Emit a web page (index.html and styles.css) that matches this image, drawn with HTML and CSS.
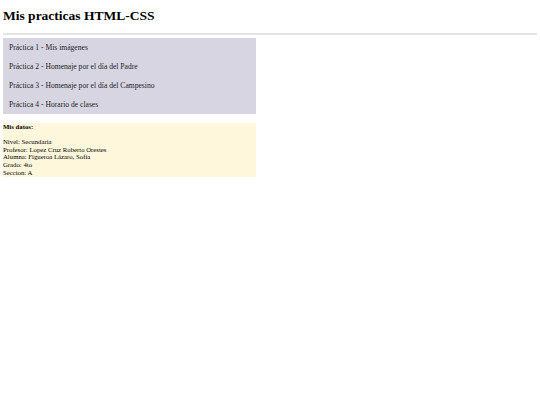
FILE: index.html
```html
<!DOCTYPE html>
<html lang="es">
<head>
<meta charset="utf-8">
<title>Mis practicas HTML-CSS</title>
<link rel="stylesheet" href="styles.css">
</head>
<body>
<div class="page">
  <h1 class="title">Mis practicas HTML-CSS</h1>
  <div class="rule"></div>
  <nav class="menu">
    <div class="menu-item">Práctica 1 - Mis imágenes</div>
    <div class="menu-item">Práctica 2 - Homenaje por el día del Padre</div>
    <div class="menu-item">Práctica 3 - Homenaje por el día del Campesino</div>
    <div class="menu-item">Práctica 4 - Horario de clases</div>
  </nav>
  <section class="datos">
    <div class="datos-title">Mis datos:</div>
    <div class="datos-list">
      <div class="datos-line">Nivel: Secundaria</div>
      <div class="datos-line">Profesor: Lopez Cruz Roberto Orestes</div>
      <div class="datos-line">Alumna: Figueroa Lázaro, Sofía</div>
      <div class="datos-line">Grado: 4to</div>
      <div class="datos-line">Seccion: A</div>
    </div>
  </section>
</div>
</body>
</html>
```

FILE: styles.css
```css
html, body {
  margin: 0;
  padding: 0;
  background: #ffffff;
}

.page {
  padding: 0 3px;
  font-family: "Liberation Serif", "Times New Roman", serif;
  color: #000;
}

.title {
  margin: 0;
  padding-top: 8px;
  font-size: 13.5px;
  line-height: 15.5px;
  font-weight: bold;
}

.rule {
  margin-top: 9.5px;
  height: 2px;
  background: #e4e4e4;
}

.menu {
  margin-top: 3px;
  width: 253px;
  background: #d8d5e3;
}

.menu-item {
  box-sizing: border-box;
  height: 18.9px;
  padding-top: 6px;
  padding-left: 6px;
  font-size: 7.6px;
  line-height: 8.7px;
  color: #222;
  white-space: nowrap;
}

.datos {
  margin-top: 9px;
  width: 253px;
  background: #fff7dc;
  font-size: 6.75px;
  line-height: 7.7px;
}

.datos-title {
  font-weight: bold;
}

.datos-list {
  margin-top: 7.8px;
}

.datos-line {
  white-space: nowrap;
}
```
